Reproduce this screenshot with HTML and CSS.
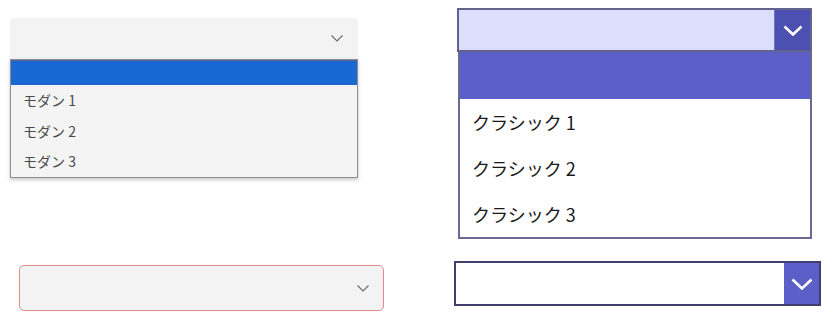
FILE: index.html
```html
<!DOCTYPE html>
<html lang="ja">
<head>
<meta charset="utf-8">
<link rel="stylesheet" href="styles.css">
</head>
<body>
<div class="page">
  <div class="col col-left">
    <div class="modern">
      <div class="m-box">
        <svg class="m-chev" width="12" height="7" viewBox="0 0 12 7"><polyline points="0.5,0.5 6,6 11.5,0.5" fill="none" stroke="#6b6b6b" stroke-width="1.2"/></svg>
      </div>
      <div class="m-list">
        <div class="m-sel"></div>
        <div class="m-item">モダン 1</div>
        <div class="m-item">モダン 2</div>
        <div class="m-item">モダン 3</div>
      </div>
    </div>
    <div class="m-error">
      <svg class="m-chev" width="12" height="7" viewBox="0 0 12 7"><polyline points="0.5,0.5 6,6 11.5,0.5" fill="none" stroke="#6b6b6b" stroke-width="1.2"/></svg>
    </div>
  </div>
  <div class="col col-right">
    <div class="classic">
      <div class="c-box">
        <div class="c-field"></div>
        <div class="c-btn c-btn-dark">
          <svg width="20" height="11" viewBox="0 0 20 11"><polyline points="1.5,1.5 10,9.5 18.5,1.5" fill="none" stroke="#ffffff" stroke-width="2.6"/></svg>
        </div>
      </div>
      <div class="c-list">
        <div class="c-sel"></div>
        <div class="c-item">クラシック 1</div>
        <div class="c-item">クラシック 2</div>
        <div class="c-item">クラシック 3</div>
      </div>
    </div>
    <div class="c-box c-box-plain">
      <div class="c-field c-field-white"></div>
      <div class="c-btn c-btn-light">
        <svg width="22" height="12" viewBox="0 0 22 12"><polyline points="1.5,1.5 11,10.5 20.5,1.5" fill="none" stroke="#ffffff" stroke-width="2.6"/></svg>
      </div>
    </div>
  </div>
</div>
</body>
</html>
```

FILE: styles.css
```css
html, body {
  margin: 0;
  padding: 0;
  background: #ffffff;
}

body {
  font-family: "Noto Sans CJK JP", "Noto Sans", sans-serif;
}

.page {
  display: grid;
  grid-template-columns: 440px 390px;
  width: 830px;
  height: 324px;
}

.col {
  display: flex;
  flex-direction: column;
  align-items: flex-start;
}

/* ---------- modern ---------- */
.modern {
  margin-top: 18px;
  margin-left: 10px;
  width: 348px;
}

.m-box {
  height: 40px;
  background: #f3f3f3;
  border-radius: 4px 4px 0 0;
  display: flex;
  align-items: center;
  justify-content: flex-end;
  padding-right: 15px;
  box-sizing: border-box;
  box-shadow: 0 1px 2px rgba(0, 0, 0, 0.06);
}

.m-chev {
  display: block;
}

.m-list {
  margin-top: 1px;
  border: 1px solid #8c8c8c;
  background: #f4f4f4;
  padding-bottom: 2px;
  box-shadow: 0 2px 4px rgba(0, 0, 0, 0.22);
}

.m-sel {
  height: 25px;
  background: #1967d2;
  border-top: 1px solid #5e5e9a;
  box-sizing: border-box;
}

.m-item {
  height: 30px;
  line-height: 31px;
  padding-left: 12px;
  font-size: 14px;
  color: #4a4a4a;
}

.m-item + .m-item {
  line-height: 32px;
}

.m-error {
  margin-top: 87px;
  margin-left: 19px;
  width: 365px;
  height: 46px;
  box-sizing: border-box;
  border: 1px solid #e5878d;
  border-radius: 5px;
  background: #f3f3f3;
  display: flex;
  align-items: center;
  justify-content: flex-end;
  padding-right: 14px;
}

/* ---------- classic ---------- */
.classic {
  margin-top: 8px;
  margin-left: 17px;
  display: flex;
  flex-direction: column;
}

.c-box {
  width: 355px;
  height: 44px;
  box-sizing: border-box;
  border: 2px solid #62628c;
  display: flex;
}

.c-field {
  flex: 1;
  background: #dcdff9;
}

.c-field-white {
  background: #ffffff;
}

.c-btn {
  width: 36px;
  display: flex;
  align-items: center;
  justify-content: center;
  box-sizing: border-box;
}

.c-btn-dark {
  background: #4c50b0;
  border-left: 1px solid #7476c4;
}

.c-btn-light {
  width: 35px;
  background: #5b5fc7;
}

.c-list {
  margin-left: 1px;
  width: 354px;
  box-sizing: border-box;
  border: 2px solid #6a6a90;
  border-top: none;
  background: #ffffff;
}

.c-sel {
  height: 47px;
  background: #5b5fc7;
}

.c-item {
  height: 46px;
  line-height: 46px;
  padding-left: 12px;
  font-size: 18px;
  color: #1a1a1a;
}

.c-box-plain {
  margin-top: 22px;
  margin-left: 14px;
  width: 367px;
  height: 45px;
  border-color: #3f3f6e;
}
```
